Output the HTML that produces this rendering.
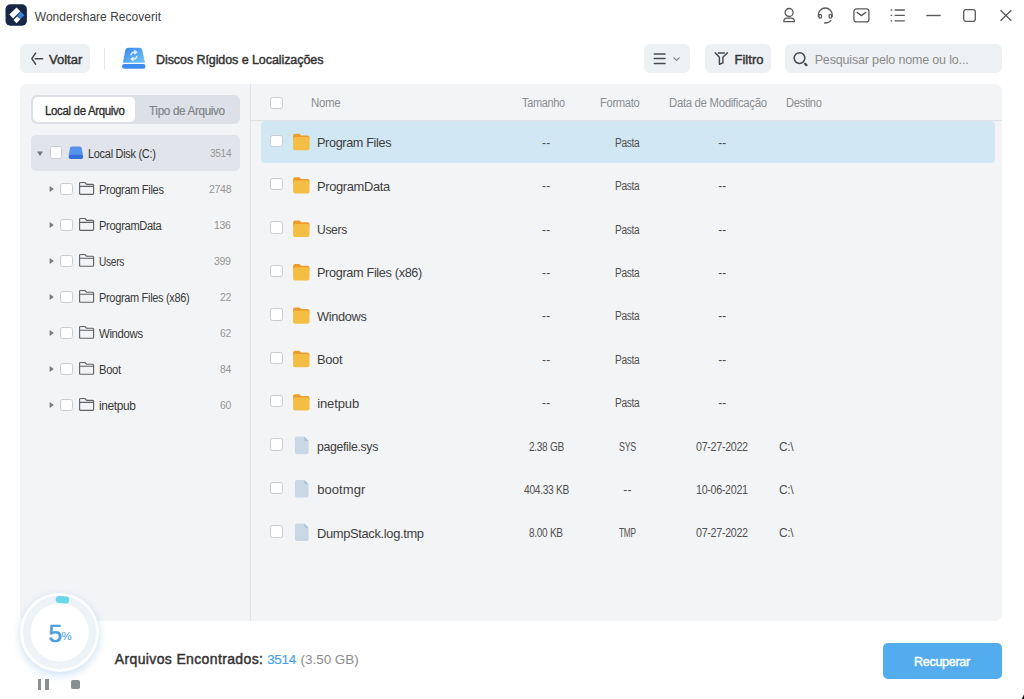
<!DOCTYPE html>
<html><head><meta charset="utf-8">
<style>
*{box-sizing:border-box;margin:0;padding:0}
html,body{width:1024px;height:699px;overflow:hidden;background:#fff}
body{position:relative;font-family:"Liberation Sans",sans-serif;color:#333}
.a{position:absolute}
.t{position:absolute;white-space:nowrap;line-height:1}
svg{position:absolute;overflow:visible}
.btn{position:absolute;background:#eef1f4;border-radius:6px}
.cb{position:absolute;width:12.5px;height:12.5px;background:#fff;border:1.5px solid #c8ccd2;border-radius:2.5px}
</style></head><body>
<svg style="left:5px;top:4px" width="23" height="23" viewBox="0.000 0.000 23 23"><g transform="translate(0.5 0.3)">
  <rect x="0" y="0" width="21.4" height="21.4" rx="5" fill="#172846"/>
  <path d="M11 3.1 L14.8 6.9 L7.6 14.1 L3.8 10.3 Z" fill="#fff"/>
  <path d="M11.8 11.9 L14.9 15 L11.1 18.9 L8 15.7 Z" fill="#fff"/>
  <path d="M15.1 7.2 L18.8 11 L15.1 14.8 L11.9 11.4 Z" fill="#3a84d6"/>
</g></svg>
<div class="t" style="left:34.80px;top:10.50px;font-size:12px;color:#404040;letter-spacing:0.018px;">Wondershare Recoverit</div>
<svg style="left:782px;top:7px" width="15" height="16" viewBox="0.000 0.000 15 16" fill="none" stroke="#5a5a5a" stroke-width="1.3">
  <circle cx="7.1" cy="5.5" r="4"/>
  <path d="M1.8 14.6 Q1.8 11.1 5 11.1 H9.2 Q12.4 11.1 12.4 14.6 Z" stroke-linejoin="round"/>
</svg>
<svg style="left:817px;top:7px" width="17" height="17" viewBox="0.000 0.000 17 17" fill="none" stroke="#5a5a5a" stroke-width="1.3">
  <path d="M1.4 10 V7.9 A6.9 6.9 0 0 1 15.2 7.9 V10"/>
  <rect x="1.9" y="7.4" width="2.6" height="3.7" rx="1.25"/>
  <rect x="12.1" y="7.4" width="2.6" height="3.7" rx="1.25"/>
  <path d="M13.9 13.4 Q12.3 15.9 7.6 16" stroke-linecap="round"/>
</svg>
<svg style="left:853px;top:8px" width="17" height="15" viewBox="0.000 0.000 17 15" fill="none" stroke="#5a5a5a" stroke-width="1.3">
  <rect x="0.9" y="0.9" width="15" height="13" rx="2.5"/>
  <path d="M4 4.4 L8.4 7.6 L12.8 4.4" stroke-linejoin="round" stroke-linecap="round"/>
</svg>
<svg style="left:890px;top:9px" width="16" height="13" viewBox="0.000 0.000 16 13" fill="none" stroke="#5a5a5a" stroke-width="1.4">
  <path d="M0.6 1 H2.2 M4.6 1 H14.8 M0.6 6.4 H2.2 M4.6 6.4 H14.8 M0.6 11.9 H2.2 M4.6 11.9 H14.8"/>
</svg>
<svg style="left:926px;top:14px" width="15" height="3" viewBox="0.000 0.000 15 3" fill="none" stroke="#5a5a5a" stroke-width="1.4"><path d="M0.3 1.5 H14.7"/></svg>
<svg style="left:963px;top:9px" width="13" height="13" viewBox="0.000 0.000 13 13" fill="none" stroke="#5a5a5a" stroke-width="1.3"><rect x="0.7" y="0.7" width="11.6" height="11.6" rx="2.2"/></svg>
<svg style="left:1000px;top:10px" width="12" height="11" viewBox="0.000 0.000 12 11" fill="none" stroke="#5a5a5a" stroke-width="1.3"><path d="M0.5 0.3 L11.3 10.7 M11.3 0.3 L0.5 10.7"/></svg>
<div class="btn" style="left:20px;top:44px;width:69.7px;height:29px"></div>
<svg style="left:26px;top:48px" width="22" height="22" viewBox="0.000 0.000 22 22" fill="none" stroke="#43484d" stroke-width="1.55" stroke-linecap="round" stroke-linejoin="round">
  <path d="M9.6 5.1 L5.8 10.6 L9.6 16.1 M9.3 10.7 H16.6"/>
</svg>
<div class="t" style="left:49.00px;top:53.30px;font-size:13px;color:#333;-webkit-text-stroke:0.45px #333;letter-spacing:0.012px;">Voltar</div>
<div class="a" style="left:104px;top:48px;width:1px;height:22px;background:#e4e6ea"></div>
<svg style="left:122px;top:47px" width="24" height="22" viewBox="0.000 0.000 24 22">
  <defs><linearGradient id="dg" x1="0" y1="0" x2="1" y2="1"><stop offset="0" stop-color="#3584f2"/><stop offset="1" stop-color="#75c8f6"/></linearGradient></defs>
  <path d="M6 0.8 H17.5 Q19.6 0.8 20.2 2.8 L23 15.7 H0.9 L3.4 2.8 Q4 0.8 6 0.8 Z" fill="url(#dg)"/>
  <rect x="0" y="17" width="23.5" height="4.8" rx="2.4" fill="#3d8cf0"/>
  <path d="M9 7.8 Q9.4 5.4 12 5.2 H14.3 M12.8 3.8 L14.6 5.2 L12.8 6.6 M14.8 9.4 Q14.4 11.8 11.8 12 H9.5 M11 10.6 L9.2 12 L11 13.4" fill="none" stroke="#fff" stroke-width="1.5" opacity="0.8" stroke-linecap="round" stroke-linejoin="round"/>
</svg>
<div class="t" style="left:156.00px;top:54.00px;font-size:12.5px;color:#333;-webkit-text-stroke:0.45px #333;letter-spacing:-0.076px;">Discos Rígidos e Localizações</div>
<div class="btn" style="left:644px;top:44px;width:46px;height:29px"></div>
<svg style="left:653px;top:52px" width="13" height="13" viewBox="0.000 -0.500 13 13" fill="none" stroke="#474c52" stroke-width="1.5" stroke-linecap="round"><path d="M1.3 1.4 H12 M1.3 6 H12 M1.3 10.9 H12"/></svg>
<svg style="left:673px;top:57px" width="7" height="4" viewBox="0.000 0.000 7 4" fill="none" stroke="#8a8a8a" stroke-width="1.1"><path d="M0.5 0.5 L3.5 3.5 L6.5 0.5"/></svg>
<div class="btn" style="left:705px;top:44px;width:66px;height:29px"></div>
<svg style="left:710px;top:48px" width="22" height="22" viewBox="0.000 0.000 22 22" fill="none" stroke="#464b50" stroke-width="1.45" stroke-linejoin="round" stroke-linecap="round">
  <path d="M5.1 4.8 L9.4 9.3 V16.2 L12.9 14.9 V9.3 L17.4 4.8 M8.3 4.9 H14.3"/>
</svg>
<div class="t" style="left:734.40px;top:53.20px;font-size:13px;color:#333;-webkit-text-stroke:0.45px #333;letter-spacing:0.063px;">Filtro</div>
<div class="btn" style="left:785px;top:44px;width:217px;height:29px"></div>
<svg style="left:788px;top:48px" width="24" height="22" viewBox="0.000 0.000 24 22" fill="none" stroke="#43484d">
  <circle cx="11.5" cy="10.1" r="5.35" stroke-width="1.55"/>
  <path d="M17.1 15.8 L18.4 17.1" stroke-linecap="round" stroke-width="2.3"/>
</svg>
<div class="t" style="left:814.70px;top:54.30px;font-size:12.5px;color:#8a8a8a;letter-spacing:-0.164px;">Pesquisar pelo nome ou lo...</div>
<div class="a" style="left:20px;top:84px;width:982px;height:537px;background:#f3f4f6;border-radius:7px"></div>
<div class="a" style="left:250px;top:84px;width:1px;height:537px;background:#e0e3e7"></div>
<div class="a" style="left:31px;top:95px;width:209px;height:29px;background:#dde1e7;border-radius:6px"></div>
<div class="a" style="left:32.8px;top:96.8px;width:102.6px;height:25.4px;background:#fff;border-radius:5px"></div>
<div class="t" style="left:44.60px;top:104.90px;font-size:12px;color:#2a2a2a;-webkit-text-stroke:0.3px #2a2a2a;letter-spacing:-0.350px;transform:scaleX(0.9559);transform-origin:0 0;">Local de Arquivo</div>
<div class="t" style="left:148.60px;top:104.60px;font-size:12px;color:#808388;-webkit-text-stroke:0.2px #808388;letter-spacing:-0.350px;transform:scaleX(0.9752);transform-origin:0 0;">Tipo de Arquivo</div>
<div class="a" style="left:31px;top:135px;width:209px;height:35.6px;background:#e1e5eb;border-radius:5px"></div>
<svg style="left:37px;top:151px" width="6" height="5" viewBox="0.000 -0.600 6 5"><path d="M0 0 H6 L3 4.3 Z" fill="#777"/></svg>
<div class="cb" style="left:49.7px;top:146.4px"></div>
<svg style="left:68px;top:146px" width="16" height="13" viewBox="-0.600 -0.400 16 13">
  <path d="M3.2 0 H11.3 Q12.5 0 12.9 1.3 L14.5 8.4 H0 L1.6 1.3 Q2 0 3.2 0 Z" fill="#5592ec"/>
  <rect x="0" y="8" width="14.5" height="4.5" rx="2" fill="#336fda"/>
</svg>
<div class="t" style="left:88.40px;top:147.60px;font-size:12px;color:#333;letter-spacing:-0.350px;transform:scaleX(0.9190);transform-origin:0 0;">Local Disk (C:)</div>
<div class="t" style="left:209.60px;top:148.30px;font-size:11.5px;color:#959595;letter-spacing:-0.350px;transform:scaleX(0.8764);transform-origin:0 0;">3514</div>
<svg style="left:49px;top:186px" width="5" height="6" viewBox="-0.700 0.000 5 6"><path d="M0 0 L4 3 L0 6 Z" fill="#777"/></svg>
<div class="cb" style="left:60.4px;top:182.9px"></div>
<svg style="left:79px;top:181px" width="16" height="14" viewBox="0.000 -0.900 16 14" fill="none" stroke="#5f6368" stroke-width="1.15" stroke-linejoin="round">
<path d="M0.6 11.4 V1.6 Q0.6 0.6 1.6 0.6 H6 L7.6 2.4 H13.6 Q14.6 2.4 14.6 3.4 V11.4 Q14.6 12.4 13.6 12.4 H1.6 Q0.6 12.4 0.6 11.4 Z M0.6 4.4 H14.6"/>
</svg>
<div class="t" style="left:99.30px;top:183.75px;font-size:12px;color:#383838;letter-spacing:-0.350px;transform:scaleX(0.9208);transform-origin:0 0;">Program Files</div>
<div class="t" style="left:208.59px;top:184.20px;font-size:11.5px;color:#959595;letter-spacing:-0.350px;transform:scaleX(0.9177);transform-origin:0 0;">2748</div>
<svg style="left:49px;top:222px" width="5" height="6" viewBox="-0.700 0.000 5 6"><path d="M0 0 L4 3 L0 6 Z" fill="#777"/></svg>
<div class="cb" style="left:60.4px;top:218.9px"></div>
<svg style="left:79px;top:217px" width="16" height="14" viewBox="0.000 -0.900 16 14" fill="none" stroke="#5f6368" stroke-width="1.15" stroke-linejoin="round">
<path d="M0.6 11.4 V1.6 Q0.6 0.6 1.6 0.6 H6 L7.6 2.4 H13.6 Q14.6 2.4 14.6 3.4 V11.4 Q14.6 12.4 13.6 12.4 H1.6 Q0.6 12.4 0.6 11.4 Z M0.6 4.4 H14.6"/>
</svg>
<div class="t" style="left:99.30px;top:219.75px;font-size:12px;color:#383838;letter-spacing:-0.350px;transform:scaleX(0.9254);transform-origin:0 0;">ProgramData</div>
<div class="t" style="left:214.21px;top:220.20px;font-size:11.5px;color:#959595;letter-spacing:-0.350px;transform:scaleX(0.9133);transform-origin:0 0;">136</div>
<svg style="left:49px;top:258px" width="5" height="6" viewBox="-0.700 0.000 5 6"><path d="M0 0 L4 3 L0 6 Z" fill="#777"/></svg>
<div class="cb" style="left:60.4px;top:254.9px"></div>
<svg style="left:79px;top:253px" width="16" height="14" viewBox="0.000 -0.900 16 14" fill="none" stroke="#5f6368" stroke-width="1.15" stroke-linejoin="round">
<path d="M0.6 11.4 V1.6 Q0.6 0.6 1.6 0.6 H6 L7.6 2.4 H13.6 Q14.6 2.4 14.6 3.4 V11.4 Q14.6 12.4 13.6 12.4 H1.6 Q0.6 12.4 0.6 11.4 Z M0.6 4.4 H14.6"/>
</svg>
<div class="t" style="left:99.30px;top:255.75px;font-size:12px;color:#383838;letter-spacing:-0.350px;transform:scaleX(0.8451);transform-origin:0 0;">Users</div>
<div class="t" style="left:214.21px;top:256.20px;font-size:11.5px;color:#959595;letter-spacing:-0.350px;transform:scaleX(0.9133);transform-origin:0 0;">399</div>
<svg style="left:49px;top:294px" width="5" height="6" viewBox="-0.700 0.000 5 6"><path d="M0 0 L4 3 L0 6 Z" fill="#777"/></svg>
<div class="cb" style="left:60.4px;top:290.9px"></div>
<svg style="left:79px;top:289px" width="16" height="14" viewBox="0.000 -0.900 16 14" fill="none" stroke="#5f6368" stroke-width="1.15" stroke-linejoin="round">
<path d="M0.6 11.4 V1.6 Q0.6 0.6 1.6 0.6 H6 L7.6 2.4 H13.6 Q14.6 2.4 14.6 3.4 V11.4 Q14.6 12.4 13.6 12.4 H1.6 Q0.6 12.4 0.6 11.4 Z M0.6 4.4 H14.6"/>
</svg>
<div class="t" style="left:99.30px;top:291.75px;font-size:12px;color:#383838;letter-spacing:-0.350px;transform:scaleX(0.9156);transform-origin:0 0;">Program Files (x86)</div>
<div class="t" style="left:219.84px;top:292.20px;font-size:11.5px;color:#959595;letter-spacing:-0.350px;transform:scaleX(0.9048);transform-origin:0 0;">22</div>
<svg style="left:49px;top:330px" width="5" height="6" viewBox="-0.700 0.000 5 6"><path d="M0 0 L4 3 L0 6 Z" fill="#777"/></svg>
<div class="cb" style="left:60.4px;top:326.9px"></div>
<svg style="left:79px;top:325px" width="16" height="14" viewBox="0.000 -0.900 16 14" fill="none" stroke="#5f6368" stroke-width="1.15" stroke-linejoin="round">
<path d="M0.6 11.4 V1.6 Q0.6 0.6 1.6 0.6 H6 L7.6 2.4 H13.6 Q14.6 2.4 14.6 3.4 V11.4 Q14.6 12.4 13.6 12.4 H1.6 Q0.6 12.4 0.6 11.4 Z M0.6 4.4 H14.6"/>
</svg>
<div class="t" style="left:99.30px;top:327.75px;font-size:12px;color:#383838;letter-spacing:-0.350px;transform:scaleX(0.9468);transform-origin:0 0;">Windows</div>
<div class="t" style="left:219.84px;top:328.20px;font-size:11.5px;color:#959595;letter-spacing:-0.350px;transform:scaleX(0.9048);transform-origin:0 0;">62</div>
<svg style="left:49px;top:366px" width="5" height="6" viewBox="-0.700 0.000 5 6"><path d="M0 0 L4 3 L0 6 Z" fill="#777"/></svg>
<div class="cb" style="left:60.4px;top:362.9px"></div>
<svg style="left:79px;top:361px" width="16" height="14" viewBox="0.000 -0.900 16 14" fill="none" stroke="#5f6368" stroke-width="1.15" stroke-linejoin="round">
<path d="M0.6 11.4 V1.6 Q0.6 0.6 1.6 0.6 H6 L7.6 2.4 H13.6 Q14.6 2.4 14.6 3.4 V11.4 Q14.6 12.4 13.6 12.4 H1.6 Q0.6 12.4 0.6 11.4 Z M0.6 4.4 H14.6"/>
</svg>
<div class="t" style="left:99.30px;top:363.75px;font-size:12px;color:#383838;letter-spacing:-0.350px;transform:scaleX(0.9351);transform-origin:0 0;">Boot</div>
<div class="t" style="left:219.84px;top:364.20px;font-size:11.5px;color:#959595;letter-spacing:-0.350px;transform:scaleX(0.9048);transform-origin:0 0;">84</div>
<svg style="left:49px;top:402px" width="5" height="6" viewBox="-0.700 0.000 5 6"><path d="M0 0 L4 3 L0 6 Z" fill="#777"/></svg>
<div class="cb" style="left:60.4px;top:398.9px"></div>
<svg style="left:79px;top:397px" width="16" height="14" viewBox="0.000 -0.900 16 14" fill="none" stroke="#5f6368" stroke-width="1.15" stroke-linejoin="round">
<path d="M0.6 11.4 V1.6 Q0.6 0.6 1.6 0.6 H6 L7.6 2.4 H13.6 Q14.6 2.4 14.6 3.4 V11.4 Q14.6 12.4 13.6 12.4 H1.6 Q0.6 12.4 0.6 11.4 Z M0.6 4.4 H14.6"/>
</svg>
<div class="t" style="left:99.30px;top:399.75px;font-size:12px;color:#383838;letter-spacing:-0.350px;transform:scaleX(0.9900);transform-origin:0 0;">inetpub</div>
<div class="t" style="left:219.84px;top:400.20px;font-size:11.5px;color:#959595;letter-spacing:-0.350px;transform:scaleX(0.9048);transform-origin:0 0;">60</div>
<div class="a" style="left:251px;top:120px;width:751px;height:1px;background:#e0e3e7"></div>
<div class="cb" style="left:270.3px;top:96.8px"></div>
<div class="t" style="left:311.00px;top:97.00px;font-size:12px;color:#8b8e93;letter-spacing:-0.350px;transform:scaleX(0.9561);transform-origin:0 0;">Nome</div>
<div class="t" style="left:521.60px;top:97.00px;font-size:12px;color:#8b8e93;letter-spacing:-0.350px;transform:scaleX(0.9118);transform-origin:0 0;">Tamanho</div>
<div class="t" style="left:599.60px;top:97.00px;font-size:12px;color:#8b8e93;letter-spacing:-0.350px;transform:scaleX(0.9348);transform-origin:0 0;">Formato</div>
<div class="t" style="left:669.30px;top:97.00px;font-size:12px;color:#8b8e93;letter-spacing:-0.350px;transform:scaleX(0.9506);transform-origin:0 0;">Data de Modificação</div>
<div class="t" style="left:785.50px;top:97.00px;font-size:12px;color:#8b8e93;letter-spacing:-0.350px;transform:scaleX(0.9304);transform-origin:0 0;">Destino</div>
<div class="a" style="left:261px;top:120.8px;width:734px;height:42.5px;background:#d1e7f4;border-radius:4px"></div>
<div class="cb" style="left:270.3px;top:134.5px"></div>
<svg style="left:293px;top:133px" width="17" height="18" viewBox="-0.100 -0.800 17 18">
<path d="M0 2 Q0 0 2 0 H5.8 Q6.6 0 7.2 0.7 L8 1.7 H14.4 Q16.4 1.7 16.4 3.7 V6 H0 Z" fill="#ee9d2a"/>
<rect x="0" y="3.3" width="16.4" height="13.1" rx="2" fill="#f4be45"/>
</svg>
<div class="t" style="left:317.20px;top:136.10px;font-size:13px;color:#3e3e3e;letter-spacing:-0.350px;transform:scaleX(0.9712);transform-origin:0 0;">Program Files</div>
<div class="t" style="left:542.05px;top:136.80px;font-size:12px;color:#505050;letter-spacing:0.308px;">--</div>
<div class="t" style="left:615.05px;top:136.80px;font-size:12px;color:#505050;letter-spacing:-0.350px;transform:scaleX(0.8433);transform-origin:0 0;">Pasta</div>
<div class="t" style="left:718.15px;top:136.80px;font-size:12px;color:#505050;letter-spacing:0.108px;">--</div>
<div class="cb" style="left:270.3px;top:177.9px"></div>
<svg style="left:293px;top:177px" width="17" height="17" viewBox="-0.100 -0.200 17 17">
<path d="M0 2 Q0 0 2 0 H5.8 Q6.6 0 7.2 0.7 L8 1.7 H14.4 Q16.4 1.7 16.4 3.7 V6 H0 Z" fill="#ee9d2a"/>
<rect x="0" y="3.3" width="16.4" height="13.1" rx="2" fill="#f4be45"/>
</svg>
<div class="t" style="left:317.20px;top:179.50px;font-size:13px;color:#3e3e3e;letter-spacing:-0.350px;transform:scaleX(0.9904);transform-origin:0 0;">ProgramData</div>
<div class="t" style="left:542.05px;top:180.20px;font-size:12px;color:#505050;letter-spacing:0.308px;">--</div>
<div class="t" style="left:615.05px;top:180.20px;font-size:12px;color:#505050;letter-spacing:-0.350px;transform:scaleX(0.8433);transform-origin:0 0;">Pasta</div>
<div class="t" style="left:718.15px;top:180.20px;font-size:12px;color:#505050;letter-spacing:0.108px;">--</div>
<div class="cb" style="left:270.3px;top:221.3px"></div>
<svg style="left:293px;top:220px" width="17" height="17" viewBox="-0.100 -0.600 17 17">
<path d="M0 2 Q0 0 2 0 H5.8 Q6.6 0 7.2 0.7 L8 1.7 H14.4 Q16.4 1.7 16.4 3.7 V6 H0 Z" fill="#ee9d2a"/>
<rect x="0" y="3.3" width="16.4" height="13.1" rx="2" fill="#f4be45"/>
</svg>
<div class="t" style="left:317.20px;top:222.90px;font-size:13px;color:#3e3e3e;letter-spacing:-0.350px;transform:scaleX(0.9278);transform-origin:0 0;">Users</div>
<div class="t" style="left:542.05px;top:223.60px;font-size:12px;color:#505050;letter-spacing:0.308px;">--</div>
<div class="t" style="left:615.05px;top:223.60px;font-size:12px;color:#505050;letter-spacing:-0.350px;transform:scaleX(0.8433);transform-origin:0 0;">Pasta</div>
<div class="t" style="left:718.15px;top:223.60px;font-size:12px;color:#505050;letter-spacing:0.108px;">--</div>
<div class="cb" style="left:270.3px;top:264.7px"></div>
<svg style="left:293px;top:264px" width="17" height="17" viewBox="-0.100 0.000 17 17">
<path d="M0 2 Q0 0 2 0 H5.8 Q6.6 0 7.2 0.7 L8 1.7 H14.4 Q16.4 1.7 16.4 3.7 V6 H0 Z" fill="#ee9d2a"/>
<rect x="0" y="3.3" width="16.4" height="13.1" rx="2" fill="#f4be45"/>
</svg>
<div class="t" style="left:317.20px;top:266.30px;font-size:13px;color:#3e3e3e;letter-spacing:-0.350px;transform:scaleX(0.9764);transform-origin:0 0;">Program Files (x86)</div>
<div class="t" style="left:542.05px;top:267.00px;font-size:12px;color:#505050;letter-spacing:0.308px;">--</div>
<div class="t" style="left:615.05px;top:267.00px;font-size:12px;color:#505050;letter-spacing:-0.350px;transform:scaleX(0.8433);transform-origin:0 0;">Pasta</div>
<div class="t" style="left:718.15px;top:267.00px;font-size:12px;color:#505050;letter-spacing:0.108px;">--</div>
<div class="cb" style="left:270.3px;top:308.1px"></div>
<svg style="left:293px;top:307px" width="17" height="17" viewBox="-0.100 -0.400 17 17">
<path d="M0 2 Q0 0 2 0 H5.8 Q6.6 0 7.2 0.7 L8 1.7 H14.4 Q16.4 1.7 16.4 3.7 V6 H0 Z" fill="#ee9d2a"/>
<rect x="0" y="3.3" width="16.4" height="13.1" rx="2" fill="#f4be45"/>
</svg>
<div class="t" style="left:317.20px;top:309.70px;font-size:13px;color:#3e3e3e;letter-spacing:-0.350px;transform:scaleX(0.9835);transform-origin:0 0;">Windows</div>
<div class="t" style="left:542.05px;top:310.40px;font-size:12px;color:#505050;letter-spacing:0.308px;">--</div>
<div class="t" style="left:615.05px;top:310.40px;font-size:12px;color:#505050;letter-spacing:-0.350px;transform:scaleX(0.8433);transform-origin:0 0;">Pasta</div>
<div class="t" style="left:718.15px;top:310.40px;font-size:12px;color:#505050;letter-spacing:0.108px;">--</div>
<div class="cb" style="left:270.3px;top:351.5px"></div>
<svg style="left:293px;top:350px" width="17" height="18" viewBox="-0.100 -0.800 17 18">
<path d="M0 2 Q0 0 2 0 H5.8 Q6.6 0 7.2 0.7 L8 1.7 H14.4 Q16.4 1.7 16.4 3.7 V6 H0 Z" fill="#ee9d2a"/>
<rect x="0" y="3.3" width="16.4" height="13.1" rx="2" fill="#f4be45"/>
</svg>
<div class="t" style="left:317.20px;top:353.10px;font-size:13px;color:#3e3e3e;letter-spacing:-0.350px;transform:scaleX(0.9926);transform-origin:0 0;">Boot</div>
<div class="t" style="left:542.05px;top:353.80px;font-size:12px;color:#505050;letter-spacing:0.308px;">--</div>
<div class="t" style="left:615.05px;top:353.80px;font-size:12px;color:#505050;letter-spacing:-0.350px;transform:scaleX(0.8433);transform-origin:0 0;">Pasta</div>
<div class="t" style="left:718.15px;top:353.80px;font-size:12px;color:#505050;letter-spacing:0.108px;">--</div>
<div class="cb" style="left:270.3px;top:394.9px"></div>
<svg style="left:293px;top:394px" width="17" height="17" viewBox="-0.100 -0.200 17 17">
<path d="M0 2 Q0 0 2 0 H5.8 Q6.6 0 7.2 0.7 L8 1.7 H14.4 Q16.4 1.7 16.4 3.7 V6 H0 Z" fill="#ee9d2a"/>
<rect x="0" y="3.3" width="16.4" height="13.1" rx="2" fill="#f4be45"/>
</svg>
<div class="t" style="left:317.20px;top:396.50px;font-size:13px;color:#3e3e3e;letter-spacing:-0.109px;">inetpub</div>
<div class="t" style="left:542.05px;top:397.20px;font-size:12px;color:#505050;letter-spacing:0.308px;">--</div>
<div class="t" style="left:615.05px;top:397.20px;font-size:12px;color:#505050;letter-spacing:-0.350px;transform:scaleX(0.8433);transform-origin:0 0;">Pasta</div>
<div class="t" style="left:718.15px;top:397.20px;font-size:12px;color:#505050;letter-spacing:0.108px;">--</div>
<div class="cb" style="left:270.3px;top:438.3px"></div>
<svg style="left:294px;top:436px" width="15" height="19" viewBox="-0.900 -0.600 15 19">
<path d="M2 0 H9.4 L13.7 4.3 V15.6 Q13.7 17.6 11.7 17.6 H2 Q0 17.6 0 15.6 V2 Q0 0 2 0 Z" fill="#cad8e5"/>
<path d="M9.4 0 L13.7 4.3 H10.6 Q9.4 4.3 9.4 3.1 Z" fill="#aac1d6"/>
</svg>
<div class="t" style="left:317.20px;top:439.90px;font-size:13px;color:#3e3e3e;letter-spacing:-0.350px;transform:scaleX(0.9459);transform-origin:0 0;">pagefile.sys</div>
<div class="t" style="left:528.60px;top:440.60px;font-size:12px;color:#505050;letter-spacing:-0.350px;transform:scaleX(0.8395);transform-origin:0 0;">2.38 GB</div>
<div class="t" style="left:618.80px;top:440.60px;font-size:12px;color:#505050;letter-spacing:-0.350px;transform:scaleX(0.7378);transform-origin:0 0;">SYS</div>
<div class="t" style="left:696.15px;top:440.60px;font-size:12px;color:#505050;letter-spacing:-0.350px;transform:scaleX(0.8946);transform-origin:0 0;">07-27-2022</div>
<div class="t" style="left:779.00px;top:440.60px;font-size:12px;color:#505050;letter-spacing:-0.318px;">C:\</div>
<div class="cb" style="left:270.3px;top:481.7px"></div>
<svg style="left:294px;top:480px" width="15" height="18" viewBox="-0.900 0.000 15 18">
<path d="M2 0 H9.4 L13.7 4.3 V15.6 Q13.7 17.6 11.7 17.6 H2 Q0 17.6 0 15.6 V2 Q0 0 2 0 Z" fill="#cad8e5"/>
<path d="M9.4 0 L13.7 4.3 H10.6 Q9.4 4.3 9.4 3.1 Z" fill="#aac1d6"/>
</svg>
<div class="t" style="left:317.20px;top:483.30px;font-size:13px;color:#3e3e3e;letter-spacing:0.068px;">bootmgr</div>
<div class="t" style="left:523.55px;top:484.00px;font-size:12px;color:#505050;letter-spacing:-0.350px;transform:scaleX(0.8508);transform-origin:0 0;">404.33 KB</div>
<div class="t" style="left:623.25px;top:484.00px;font-size:12px;color:#505050;letter-spacing:0.308px;">--</div>
<div class="t" style="left:696.20px;top:484.00px;font-size:12px;color:#505050;letter-spacing:-0.350px;transform:scaleX(0.8929);transform-origin:0 0;">10-06-2021</div>
<div class="t" style="left:779.00px;top:484.00px;font-size:12px;color:#505050;letter-spacing:-0.318px;">C:\</div>
<div class="cb" style="left:270.3px;top:525.1px"></div>
<svg style="left:294px;top:523px" width="15" height="18" viewBox="-0.900 -0.400 15 18">
<path d="M2 0 H9.4 L13.7 4.3 V15.6 Q13.7 17.6 11.7 17.6 H2 Q0 17.6 0 15.6 V2 Q0 0 2 0 Z" fill="#cad8e5"/>
<path d="M9.4 0 L13.7 4.3 H10.6 Q9.4 4.3 9.4 3.1 Z" fill="#aac1d6"/>
</svg>
<div class="t" style="left:317.20px;top:526.70px;font-size:13px;color:#3e3e3e;letter-spacing:-0.350px;transform:scaleX(0.9923);transform-origin:0 0;">DumpStack.log.tmp</div>
<div class="t" style="left:529.20px;top:527.40px;font-size:12px;color:#505050;letter-spacing:-0.350px;transform:scaleX(0.8375);transform-origin:0 0;">8.00 KB</div>
<div class="t" style="left:618.90px;top:527.40px;font-size:12px;color:#505050;letter-spacing:-0.350px;transform:scaleX(0.6902);transform-origin:0 0;">TMP</div>
<div class="t" style="left:696.15px;top:527.40px;font-size:12px;color:#505050;letter-spacing:-0.350px;transform:scaleX(0.8946);transform-origin:0 0;">07-27-2022</div>
<div class="t" style="left:779.00px;top:527.40px;font-size:12px;color:#505050;letter-spacing:-0.318px;">C:\</div>
<div class="a" style="left:20.1px;top:592.7px;width:79.2px;height:79.2px;border-radius:50%;background:#fff;box-shadow:0 3px 9px rgba(70,145,215,0.28)"></div>
<svg style="left:20px;top:593px" width="79" height="79" viewBox="-0.300 0.000 79 79">
  <circle cx="39.3" cy="39.3" r="32.9" fill="none" stroke="#eef3f7" stroke-width="7.6"/>
  <path d="M38.9 6.4 A32.9 32.9 0 0 1 45.4 7.0" fill="none" stroke="#6bd6e7" stroke-width="7" stroke-linecap="round"/>
</svg>
<div class="t" style="left:48.50px;top:621.60px;font-size:24.5px;color:#4a9ee0;-webkit-text-stroke:0.5px #4a9ee0;letter-spacing:0.000px;">5</div>
<div class="t" style="left:61.60px;top:631.20px;font-size:11.5px;color:#4a9ee0;letter-spacing:0.000px;">%</div>
<div class="a" style="left:38.1px;top:679.2px;width:3.3px;height:10.6px;background:#898e93"></div>
<div class="a" style="left:45.3px;top:679.2px;width:3.5px;height:10.6px;background:#898e93"></div>
<div class="a" style="left:71.2px;top:680.2px;width:9px;height:8.6px;background:#898e93;border-radius:1.8px"></div>
<div class="t" style="left:114.80px;top:652.00px;font-size:14px;color:#333;-webkit-text-stroke:0.45px #333;letter-spacing:0.362px;">Arquivos Encontrados:</div>
<div class="t" style="left:267.20px;top:653.00px;font-size:13.5px;color:#48a4ea;-webkit-text-stroke:0.2px #48a4ea;letter-spacing:-0.344px;">3514</div>
<div class="t" style="left:300.60px;top:653.00px;font-size:13.5px;color:#8c8c8c;letter-spacing:-0.053px;">(3.50 GB)</div>
<div class="a" style="left:883px;top:643px;width:119px;height:36px;background:#52acee;border-radius:5px"></div>
<div class="t" style="left:914.40px;top:655.30px;font-size:13px;color:#fff;-webkit-text-stroke:0.45px #fff;letter-spacing:-0.350px;transform:scaleX(0.9707);transform-origin:0 0;">Recuperar</div>
<svg style="left:1021px;top:694px" width="3" height="5" viewBox="0.000 0.000 3 5"><path d="M3 0.5 L3 5 L0.6 5 Z" fill="#111"/></svg>
</body></html>
